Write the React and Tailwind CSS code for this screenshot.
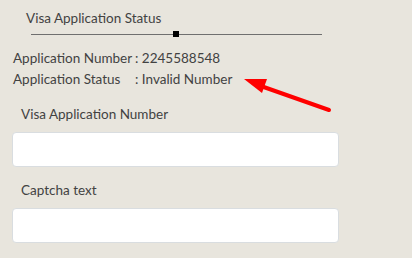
export default function App() {
  return (
    <div className="relative w-[412px] h-[258px] overflow-hidden bg-[#e8e5dd] text-[#424242] font-['Lato',sans-serif] whitespace-nowrap">
      <div className="pt-[9px] pl-[26px] text-[13.5px] leading-[18px]">Visa Application Status</div>
      <div className="relative mt-[7px] ml-[31px] w-[291px] h-px bg-[#6f6f6f]">
        <div className="absolute left-[142px] top-[-3px] w-[6px] h-[6px] bg-black" />
      </div>
      <div className="mt-[13px] pl-[13px] text-[13.5px] leading-[21px]">
        <div className="flex">
          <span className="w-[122px]">Application Number</span>
          <span>: 2245588548</span>
        </div>
        <div className="flex">
          <span className="w-[122px]">Application Status</span>
          <span>: Invalid Number</span>
        </div>
      </div>
      <div className="mt-[15px] pl-[21px] text-[13.5px] leading-[18px]">Visa Application Number</div>
      <div className="mt-[9px] ml-[12px] w-[327px] h-[35px] rounded-[4px] bg-white border border-[#d9dde0]" />
      <div className="mt-[14px] pl-[21px] text-[13.5px] leading-[18px]">Captcha text</div>
      <div className="mt-[9px] ml-[12px] w-[327px] h-[35px] rounded-[4px] bg-white border border-[#d9dde0]" />
      <svg className="absolute left-0 top-0" width="412" height="258" viewBox="0 0 412 258">
        <line x1="329" y1="110" x2="258" y2="85" stroke="#ff0000" strokeWidth="4" strokeLinecap="round" />
        <polygon points="244,79 267,79 262,93" fill="#ff0000" />
      </svg>
    </div>
  );
}
